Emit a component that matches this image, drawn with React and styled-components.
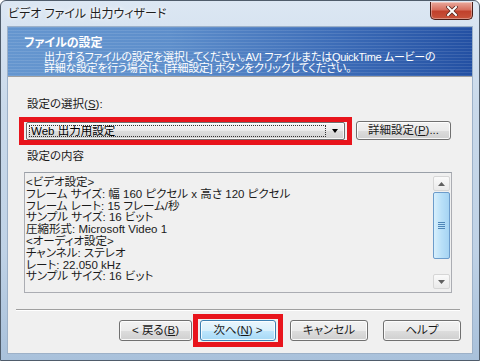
import React from "react";
import styled, { createGlobalStyle } from "styled-components";

const Global = createGlobalStyle`
  html, body { margin: 0; padding: 0; background: #ffffff; }
  * { box-sizing: border-box; }
`;

const FONT = `"Liberation Sans", "Noto Sans CJK JP", sans-serif`;

const Window = styled.div`
  width: 480px;
  height: 361px;
  display: flex;
  flex-direction: column;
  padding: 0 7px 7px;
  border: 1px solid #4f5c6b;
  border-radius: 6px 6px 0 0;
  background: linear-gradient(180deg, #dce7f3 0%, #c9d9ea 30%, #bfd2e6 70%, #a9c1db 100%);
  font-family: ${FONT};
  font-feature-settings: "palt";
  color: #000;
`;

const TitleBar = styled.div`
  height: 26px;
  display: flex;
  align-items: flex-start;
  justify-content: space-between;
`;

const TitleText = styled.div`
  font-size: 12px;
  line-height: 14px;
  padding-top: 6px;
  color: #1e1e1e;
  text-shadow: 0 0 6px #ffffff, 0 0 3px #ffffff;
`;

const CloseButton = styled.div`
  width: 43px;
  height: 18px;
  margin-top: 1px;
  margin-right: -1px;
  border: 1px solid #4a1d17;
  border-top: none;
  border-radius: 0 0 5px 5px;
  background: linear-gradient(180deg, #e9a99c 0%, #d7705f 45%, #c1412c 55%, #c8533b 100%);
  box-shadow: inset 0 0 0 1px rgba(255, 255, 255, 0.35);
  display: flex;
  align-items: center;
  justify-content: center;
`;

const Client = styled.div`
  flex: 1;
  display: flex;
  flex-direction: column;
  background: #f0f0f0;
  box-shadow: 0 0 0 1px #9db1c8;
`;

const Header = styled.div`
  height: 50px;
  padding: 9px 0 0 16px;
  border-bottom: 1px solid #a0a0a0;
  color: #ffffff;
  background:
    repeating-linear-gradient(180deg, rgba(255, 255, 255, 0.1) 0 1px, rgba(0, 0, 0, 0) 1px 3px),
    linear-gradient(90deg, #6596cf 0%, #5d8ecb 35%, #3d6db8 70%, #2350a3 100%);
`;

const HeaderTitle = styled.div`
  font-size: 12px;
  font-weight: bold;
  line-height: 14px;
`;

const HeaderDesc = styled.div`
  font-size: 11px;
  letter-spacing: -0.3px;
  line-height: 11px;
  padding-left: 20px;
  margin-top: 2px;
`;

const Content = styled.div`
  flex: 1;
  display: flex;
  flex-direction: column;
  padding: 20px 20px 0 16px;
`;

const Label = styled.div`
  font-size: 11.5px;
  line-height: 14px;
  padding-left: ${(p) => p.$indent || 3}px;
  margin-top: ${(p) => p.$top || 0}px;
  color: #1a1a1a;
`;

const Row = styled.div`
  display: flex;
  align-items: center;
  margin-top: 10px;
  gap: 11px;
`;

/* red annotation frame drawn around a control without moving it */
const Marked = styled.div`
  display: flex;
  flex-shrink: 0;
  border: 5px solid #e8141c;
  padding: ${(p) => p.$pad};
  margin: ${(p) => p.$mar};
`;

const Combo = styled.div`
  width: 319px;
  height: 18px;
  border: 1px solid #707070;
  border-radius: 2px;
  background: linear-gradient(180deg, #f5f5f5 0%, #eaeaea 50%, #dddddd 51%, #d2d2d2 100%);
  box-shadow: inset 0 0 0 1px rgba(255, 255, 255, 0.8);
  display: flex;
  align-items: center;
  padding: 0 6px 0 2px;
`;

const ComboText = styled.div`
  flex: 1;
  height: 12px;
  border: 1px dotted #333;
  font-size: 11.5px;
  line-height: 11px;
  padding-left: 1px;
`;

const Arrow = styled.div`
  width: 0;
  height: 0;
  margin-left: 6px;
  border-left: 3.5px solid transparent;
  border-right: 3.5px solid transparent;
  border-top: 4px solid #000;
`;

const Button = styled.div`
  width: ${(p) => p.$w}px;
  height: ${(p) => p.$h || 19}px;
  border: 1px solid ${(p) => (p.$def ? "#3c7fb1" : "#707070")};
  border-radius: 3px;
  background: ${(p) =>
    p.$def
      ? "linear-gradient(180deg, #eaf6fd 0%, #d9f0fc 50%, #bee6fd 51%, #a7d9f5 100%)"
      : "linear-gradient(180deg, #f2f2f2 0%, #ebebeb 50%, #dddddd 51%, #cfcfcf 100%)"};
  box-shadow: inset 0 0 0 1px rgba(255, 255, 255, 0.85);
  display: flex;
  align-items: center;
  justify-content: center;
  font-size: 11.5px;
  line-height: 13px;
  color: #1a1a1a;
  flex-shrink: 0;
`;

const U = styled.span`
  text-decoration: underline;
`;

const TextBox = styled.div`
  margin-top: 9px;
  height: 121px;
  width: 428px;
  border: 1px solid #abadb3;
  border-top-color: #9aa0a8;
  background: #f0f0f0;
  display: flex;
`;

const TextLines = styled.div`
  flex: 1;
  padding: 4px 0 0 1px;
  font-size: 11.5px;
  line-height: 11.8px;
  white-space: pre;
  color: #1a1a1a;
`;

const ScrollBar = styled.div`
  width: 17px;
  margin: 3px 1px 3px 0;
  display: flex;
  flex-direction: column;
  align-items: stretch;
`;

const ScrollBtn = styled.div`
  height: 15px;
  border: 1px solid #d6d6d6;
  border-radius: 2px;
  background: linear-gradient(180deg, #fafafa, #eaeaea);
  display: flex;
  align-items: center;
  justify-content: center;
`;

const Track = styled.div`
  flex: 1;
  display: flex;
  flex-direction: column;
  padding: 1px 0;
`;

const Thumb = styled.div`
  height: 67px;
  border: 1px solid #6c9ccb;
  border-radius: 2px;
  background: linear-gradient(90deg, #d7effc 0%, #b9e0f8 50%, #a6d4f3 100%);
  display: flex;
  align-items: center;
  justify-content: center;
`;

const Grip = styled.div`
  width: 7px;
  height: 7px;
  background: repeating-linear-gradient(180deg, #4f86b8 0 1px, transparent 1px 2px);
`;

const Footer = styled.div`
  display: flex;
  flex-direction: column;
  margin-top: 16px;
  margin-left: -8px;
  margin-right: -8px;
`;

const Separator = styled.div`
  height: 2px;
  border-top: 1px solid #a0a0a0;
  border-bottom: 1px solid #ffffff;
`;

const ButtonRow = styled.div`
  display: flex;
  align-items: center;
  padding-left: 103px;
  margin-top: 9px;
`;

const Gap = styled.div`
  width: ${(p) => p.$w}px;
  flex-shrink: 0;
`;

const lines = [
  "<ビデオ設定>",
  "フレーム サイズ: 幅 160 ピクセル x 高さ 120 ピクセル",
  "フレーム レート: 15 フレーム/秒",
  "サンプル サイズ: 16 ビット",
  "圧縮形式: Microsoft Video 1",
  "<オーディオ設定>",
  "チャンネル: ステレオ",
  "レート: 22.050 kHz",
  "サンプル サイズ: 16 ビット",
];

export default function App() {
  return (
    <>
      <Global />
      <Window>
        <TitleBar>
          <TitleText>ビデオ ファイル 出力ウィザード</TitleText>
          <CloseButton>
            <svg width="12" height="10" viewBox="0 0 12 10">
              <path d="M2 1 L10 9 M10 1 L2 9" stroke="#5a2a22" strokeWidth="3.6" strokeLinecap="square" />
              <path d="M2 1 L10 9 M10 1 L2 9" stroke="#ffffff" strokeWidth="2" strokeLinecap="square" />
            </svg>
          </CloseButton>
        </TitleBar>
        <Client>
          <Header>
            <HeaderTitle>ファイルの設定</HeaderTitle>
            <HeaderDesc>
              出力するファイルの設定を選択してください。AVI ファイルまたはQuickTime ムービーの
              <br />
              詳細な設定を行う場合は、[詳細設定] ボタンをクリックしてください。
            </HeaderDesc>
          </Header>
          <Content>
            <Label>
              設定の選択(<U>S</U>):
            </Label>
            <Row>
              <Marked $pad="0 2px" $mar="-5px -7px -5px -5px">
                <Combo>
                  <ComboText>Web 出力用設定</ComboText>
                  <Arrow />
                </Combo>
              </Marked>
              <Button $w={95} $h={19}>
                詳細設定(<U>P</U>)...
              </Button>
            </Row>
            <Label $top={9}>設定の内容</Label>
            <TextBox>
              <TextLines>{lines.join("\n")}</TextLines>
              <ScrollBar>
                <ScrollBtn>
                  <svg width="7" height="4" viewBox="0 0 7 4">
                    <path d="M0 4 L3.5 0 L7 4 Z" fill="#606060" />
                  </svg>
                </ScrollBtn>
                <Track>
                  <Thumb>
                    <Grip />
                  </Thumb>
                </Track>
                <ScrollBtn>
                  <svg width="7" height="4" viewBox="0 0 7 4">
                    <path d="M0 0 L3.5 4 L7 0 Z" fill="#606060" />
                  </svg>
                </ScrollBtn>
              </ScrollBar>
            </TextBox>
            <Footer>
              <Separator />
              <ButtonRow>
                <Button $w={73} $h={21}>
                  &lt; 戻る(<U>B</U>)
                </Button>
                <Gap $w={8} />
                <Marked $pad="1px 2px 1px 2px" $mar="-6px -7px -6px -7px">
                  <Button $w={76} $h={21} $def>
                    次へ(<U>N</U>) &gt;
                  </Button>
                </Marked>
                <Gap $w={14} />
                <Button $w={78} $h={21}>
                  キャンセル
                </Button>
                <Gap $w={15} />
                <Button $w={78} $h={21}>
                  ヘルプ
                </Button>
              </ButtonRow>
            </Footer>
          </Content>
        </Client>
      </Window>
    </>
  );
}
